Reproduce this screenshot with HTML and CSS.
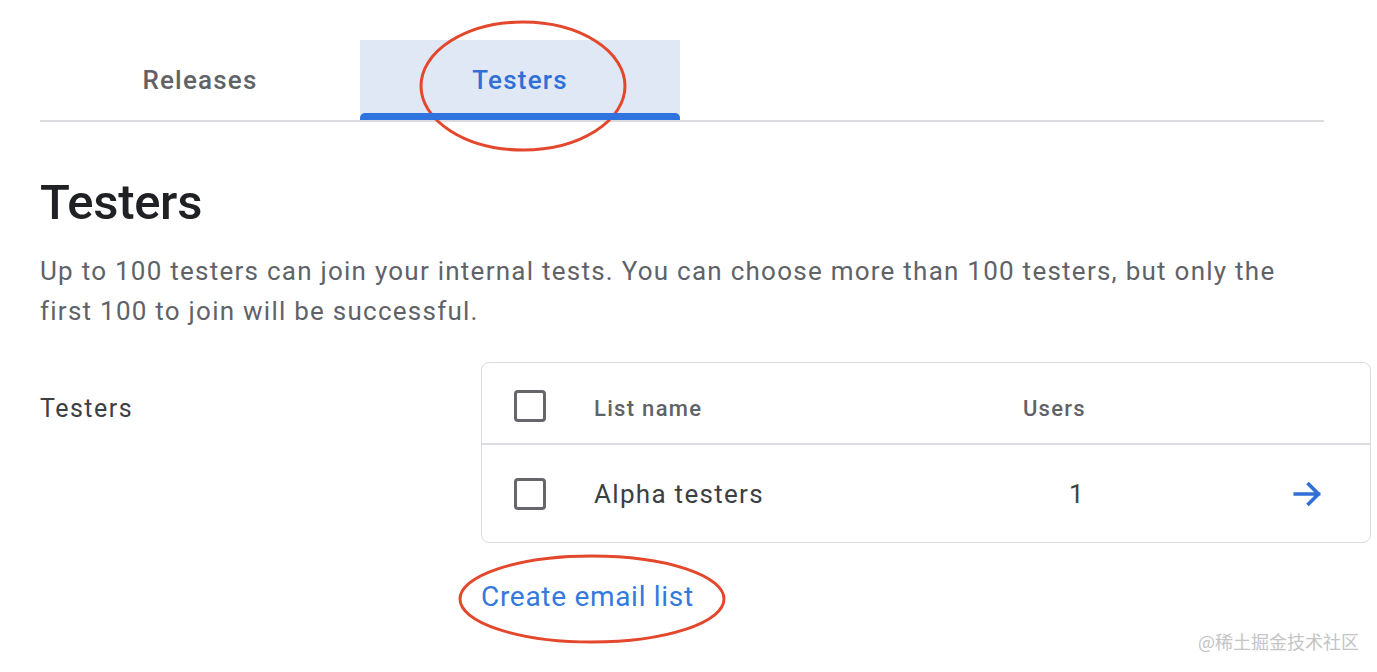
FILE: index.html
```html
<!DOCTYPE html>
<html>
<head>
<meta charset="utf-8">
<link rel="stylesheet" href="styles.css">
</head>
<body>
<div class="page">
  <div class="tabs">
    <div class="tab">Releases</div>
    <div class="tab active">Testers
      <svg class="ring ring-tab" viewBox="0 0 210 134" width="210" height="134"><ellipse cx="105" cy="67" rx="102" ry="64" fill="none" stroke="#e3472c" stroke-width="3"/></svg>
    </div>
  </div>

  <h1 class="title">Testers</h1>
  <p class="desc">Up to 100 testers can join your internal tests. You can choose more than 100 testers, but only the first 100 to join will be successful.</p>

  <div class="section">
    <div class="label">Testers</div>
    <div class="right">
      <div class="table">
        <div class="row head">
          <span class="check"></span>
          <span class="name">List name</span>
          <span class="users">Users</span>
          <span class="action"></span>
        </div>
        <div class="row body">
          <span class="check"></span>
          <span class="name">Alpha testers</span>
          <span class="users num">1</span>
          <span class="action">
            <svg viewBox="0 0 24 24" width="36" height="36"><path d="M3.5 12h15.5M12.5 5.5L19 12l-6.5 6.5" fill="none" stroke="#2f6fd6" stroke-width="2.4" stroke-linecap="square"/></svg>
          </span>
        </div>
      </div>
      <div class="create">Create email list
        <svg class="ring ring-create" viewBox="0 0 270 92" width="270" height="92"><ellipse cx="135" cy="46" rx="132" ry="43" fill="none" stroke="#e3472c" stroke-width="3"/></svg>
      </div>
    </div>
  </div>
  <div class="watermark">@稀土掘金技术社区</div>
</div>
</body>
</html>
```

FILE: styles.css
```css
* { box-sizing: border-box; }
html, body { margin: 0; padding: 0; background: #fff; }
body {
  font-family: Roboto, "Noto Sans", "Liberation Sans", sans-serif;
  width: 1377px;
  height: 672px;
  overflow: hidden;
}
.page {
  position: relative;
  padding: 40px 0 0 40px;
  height: 672px;
}
.tabs {
  display: flex;
  width: 1284px;
  border-bottom: 2px solid #dadce0;
}
.tab {
  position: relative;
  width: 320px;
  height: 80px;
  display: flex;
  align-items: center;
  justify-content: center;
  font-size: 26px;
  font-weight: 500;
  letter-spacing: 1.2px;
  color: #5f6368;
}
.tab.active {
  background: #e1e8f5;
  color: #2f6fd6;
}
.tab.active::after {
  content: "";
  position: absolute;
  left: 0;
  right: 0;
  bottom: 0;
  height: 7px;
  background: #2f73de;
  border-radius: 5px 5px 0 0;
}
.ring { position: absolute; pointer-events: none; }
.ring-tab { left: 58px; top: -21px; }
.title {
  margin: 51px 0 0;
  font-size: 49px;
  font-weight: 500;
  color: #202124;
  line-height: 60px;
  letter-spacing: -0.3px;
}
.desc {
  margin: 18px 0 0;
  width: 1290px;
  font-size: 26px;
  line-height: 40px;
  letter-spacing: 1.25px;
  color: #5f6368;
}
.section {
  display: flex;
  margin-top: 31px;
}
.label {
  width: 441px;
  padding-top: 32px;
  font-size: 25px;
  letter-spacing: 1.5px;
  color: #3c4043;
}
.right { display: flex; flex-direction: column; }
.table {
  width: 890px;
  border: 1px solid #dadce0;
  border-radius: 8px;
}
.row {
  display: flex;
  align-items: center;
  padding-left: 32px;
}
.row.head { height: 82px; padding-top: 6px; border-bottom: 2px solid #dadce0; }
.row.body { height: 97px; }
.check {
  width: 32px;
  height: 32px;
  border: 3px solid #646669;
  border-radius: 4px;
  margin-right: 48px;
}
.name { width: 400px; }
.head .name, .head .users {
  font-size: 22px;
  font-weight: 500;
  letter-spacing: 1.3px;
  color: #5f6368;
  padding-top: 4px;
}
.body .name, .body .users {
  font-size: 26px;
  letter-spacing: 1.3px;
  color: #3c4043;
}
.users { width: 92px; text-align: right; }
.users.num { padding-right: 1px; }
.action { margin-left: 204px; display: flex; align-items: center; }
.create {
  position: relative;
  margin-top: 37px;
  font-size: 28px;
  letter-spacing: 0.7px;
  color: #3579dd;
  align-self: flex-start;
}
.ring-create { left: -24px; top: -27px; }
.watermark {
  position: absolute;
  right: 18px;
  bottom: 18px;
  font-family: "Noto Sans CJK SC", sans-serif;
  font-size: 18px;
  color: #c4c4c4;
}
```
